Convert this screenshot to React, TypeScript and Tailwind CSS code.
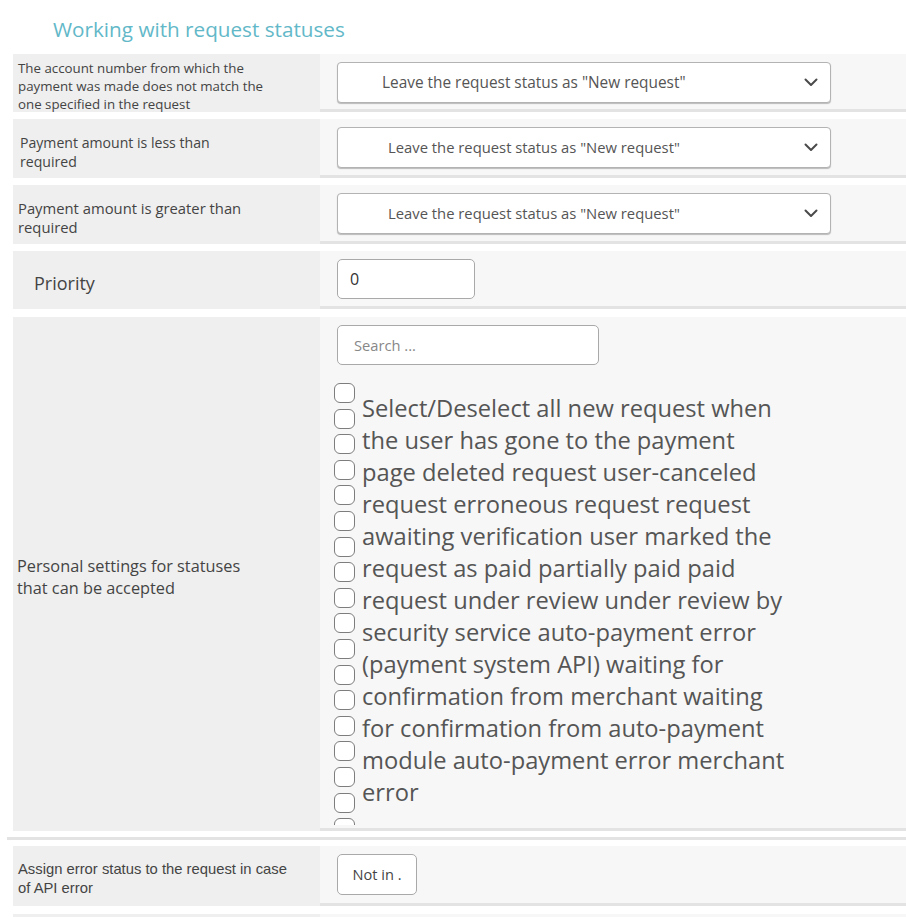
import { ReactNode } from "react";

const statusLines = [
  "Select/Deselect all new request when",
  "the user has gone to the payment",
  "page deleted request user-canceled",
  "request erroneous request request",
  "awaiting verification user marked the",
  "request as paid partially paid paid",
  "request under review under review by",
  "security service auto-payment error",
  "(payment system API) waiting for",
  "confirmation from merchant waiting",
  "for confirmation from auto-payment",
  "module auto-payment error merchant",
  "error",
];

const Chevron = () => (
  <svg width="14" height="9" viewBox="0 0 14 9" fill="none">
    <path
      d="M1.5 1.5L7 7L12.5 1.5"
      stroke="#4a4a4a"
      strokeWidth="2"
      strokeLinecap="round"
      strokeLinejoin="round"
    />
  </svg>
);

const Row = (props: {
  label: ReactNode;
  height: string;
  labelClass: string;
  children: ReactNode;
}) => {
  return (
    <div className={`flex ml-[13px] ${props.height}`}>
      <div className={`w-[307px] shrink-0 bg-[#efefef] flex items-center pt-[6px] ${props.labelClass}`}>
        {props.label}
      </div>
      <div className="flex-1 bg-[#f7f7f7] border-b-[3px] border-[#e3e3e3]">
        {props.children}
      </div>
    </div>
  );
};

const StatusSelect = (props: { textPad: string; size: string }) => (
  <div className="mt-[8px] ml-[17px] w-[494px] h-[41px] bg-white border border-[#b3b3b3] rounded-[4px] shadow-[0_1px_1px_rgba(0,0,0,0.25)] flex items-center">
    <span className={`${props.textPad} ${props.size} text-[#555] flex-1`}>
      Leave the request status as "New request"
    </span>
    <span className="mr-[12px] flex">
      <Chevron />
    </span>
  </div>
);

export default function App() {
  return (
    <div className="w-[906px] h-[917px] overflow-hidden bg-white font-['Open_Sans','Noto_Sans',sans-serif]">
      <div className="h-[54px] pl-[53px] pt-[15px] text-[20.7px] leading-[28px] text-[#62b8c8]">
        Working with request statuses
      </div>

      <Row
        height="h-[58px]"
        labelClass="pl-[5px] text-[13.3px] leading-[18px] text-[#444]"
        label={
          <span>
            The account number from which the
            <br />
            payment was made does not match the
            <br />
            one specified in the request
          </span>
        }
      >
        <StatusSelect textPad="pl-[44px]" size="text-[15.4px]" />
      </Row>

      <div className="mt-[7px]">
        <Row
          height="h-[59px]"
          labelClass="pl-[7px] text-[14.1px] leading-[19px] text-[#444]"
          label={
            <span>
              Payment amount is less than
              <br />
              required
            </span>
          }
        >
          <StatusSelect textPad="pl-[50px]" size="text-[14.8px]" />
        </Row>
      </div>

      <div className="mt-[7px]">
        <Row
          height="h-[59px]"
          labelClass="pl-[5px] text-[14.8px] leading-[19px] text-[#444]"
          label={
            <span>
              Payment amount is greater than
              <br />
              required
            </span>
          }
        >
          <StatusSelect textPad="pl-[50px]" size="text-[14.8px]" />
        </Row>
      </div>

      <div className="mt-[7px]">
        <Row
          height="h-[58px]"
          labelClass="pl-[21px] text-[18px] text-[#444]"
          label={<span>Priority</span>}
        >
          <div className="mt-[8px] ml-[17px] w-[138px] h-[40px] bg-white border border-[#a9a9a9] rounded-[5px] flex items-center pl-[12px] text-[16px] text-[#333]">
            0
          </div>
        </Row>
      </div>

      <div className="mt-[8px]">
        <Row
          height="h-[514px]"
          labelClass="pl-[4px] text-[16.3px] leading-[22px] text-[#444]"
          label={
            <span>
              Personal settings for statuses
              <br />
              that can be accepted
            </span>
          }
        >
          <div className="pt-[8px] pl-[17px]">
            <div className="w-[262px] h-[40px] bg-white border border-[#a9a9a9] rounded-[5px] flex items-center pl-[16px] text-[14.7px] text-[#888]">
              Search ...
            </div>
            <div className="flex mt-[18px]">
              <div className="ml-[-3px] w-[22px] h-[442px] overflow-hidden flex flex-col gap-[5.6px]">
                {Array.from({ length: 18 }).map((_, i) => (
                  <div
                    key={i}
                    className="w-[21px] h-[20px] shrink-0 rounded-[6px] border-[1.5px] border-[#7d7d7d] bg-white"
                  />
                ))}
              </div>
              <div className="ml-[6px] mt-[9px] text-[23.7px] leading-[32px] text-[#555]">
                {statusLines.map((line) => (
                  <div key={line}>{line}</div>
                ))}
              </div>
            </div>
          </div>
        </Row>
      </div>

      <div className="mt-[6px] ml-[7px] h-[3px] bg-[#e3e3e3]" />

      <div className="mt-[6px]">
        <Row
          height="h-[60px]"
          labelClass="pl-[5px] text-[14.8px] leading-[19px] text-[#444] font-['Liberation_Sans_Narrow','Liberation_Sans',sans-serif]"
          label={
            <span>
              Assign error status to the request in case
              <br />
              of API error
            </span>
          }
        >
          <div className="mt-[8px] ml-[17px] w-[80px] h-[41px] bg-white border border-[#a9a9a9] rounded-[5px] flex items-center justify-center text-[14.6px] text-[#444]">
            Not in .
          </div>
        </Row>
      </div>

      <div className="mt-[8px]">
        <Row height="h-[58px]" labelClass="" label={null}>
          <div />
        </Row>
      </div>
    </div>
  );
}
